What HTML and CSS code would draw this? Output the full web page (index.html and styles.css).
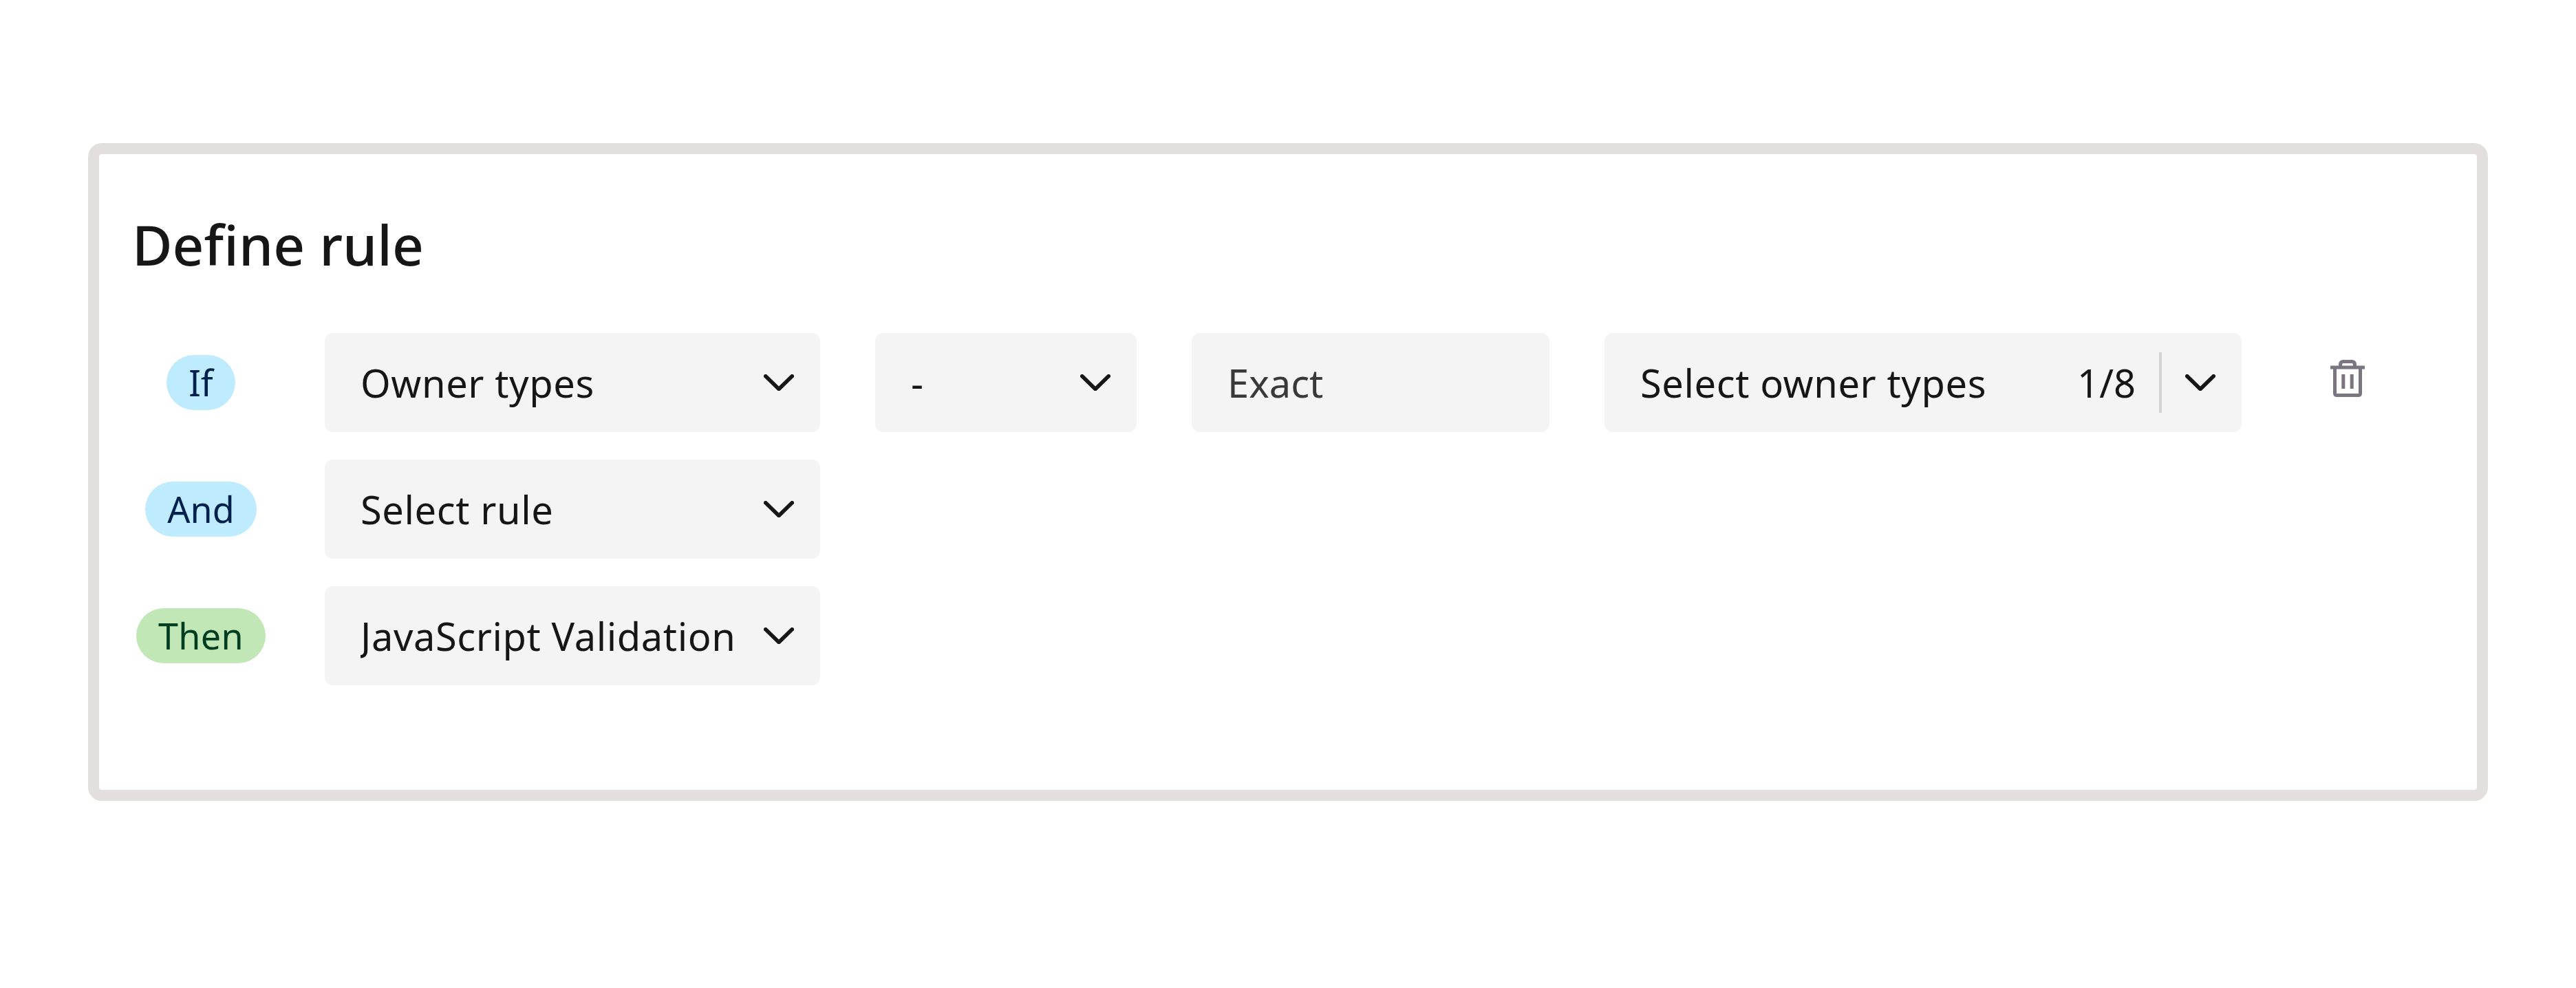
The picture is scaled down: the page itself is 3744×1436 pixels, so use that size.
FILE: index.html
```html
<!DOCTYPE html>
<html lang="en">
<head>
<meta charset="utf-8">
<title>Define rule</title>
<link rel="stylesheet" href="styles.css">
</head>
<body>
<main class="card">
  <h1 class="title">Define rule</h1>
  <div class="rules">
    <div class="row">
      <div class="tag-cell"><span class="tag">If</span></div>
      <div class="field field-rule"><span class="label">Owner types</span>
        <svg class="chevron" viewBox="0 0 44 24"><path d="M2.8 2.8 22 21.4 41.2 2.8"/></svg></div>
      <div class="field field-operator"><span class="label">-</span>
        <svg class="chevron" viewBox="0 0 44 24"><path d="M2.8 2.8 22 21.4 41.2 2.8"/></svg></div>
      <div class="field field-match"><span class="label">Exact</span></div>
      <div class="field field-owner"><span class="label">Select owner types</span>
        <span class="count">1/8</span><i class="divider"></i>
        <svg class="chevron" viewBox="0 0 44 24"><path d="M2.8 2.8 22 21.4 41.2 2.8"/></svg></div>
      <svg class="trash" viewBox="0 0 50 56"><path d="M0 12H50M6.5 12V49.5Q6.5 52.5 9.5 52.5H40.5Q43.5 52.5 43.5 49.5V12M14.5 12V8Q14.5 3.5 19 3.5H31Q35.5 3.5 35.5 8V12M18.8 22V43M31.2 22V43"/></svg>
    </div>
    <div class="row">
      <div class="tag-cell"><span class="tag">And</span></div>
      <div class="field field-rule"><span class="label">Select rule</span>
        <svg class="chevron" viewBox="0 0 44 24"><path d="M2.8 2.8 22 21.4 41.2 2.8"/></svg></div>
    </div>
    <div class="row">
      <div class="tag-cell"><span class="tag tag-then">Then</span></div>
      <div class="field field-rule"><span class="label">JavaScript Validation</span>
        <svg class="chevron" viewBox="0 0 44 24"><path d="M2.8 2.8 22 21.4 41.2 2.8"/></svg></div>
    </div>
  </div>
</main>
</body>
</html>
```
FILE: styles.css
```css
* { box-sizing: border-box; }
body {
  margin: 0;
  padding: 208px 128px;
  background: #fff;
  color: #161616;
  font-family: "Noto Sans", sans-serif;
}
.card {
  height: 956px;
  border: 16px solid #e3dfde;
  border-radius: 20px;
  padding: 76px 48px 0;
  background: #fff;
}
.title {
  margin: 0;
  font-size: 80px;
  line-height: 110px;
  font-weight: 500;
  font-variant-ligatures: none;
  letter-spacing: 0.1px;
}
.rules { display: flex; flex-direction: column; gap: 40px; margin-top: 74px; }
.row { display: flex; align-items: center; height: 144px; }
.tag-cell { width: 200px; margin-right: 80px; display: flex; justify-content: center; }
.tag {
  height: 80px;
  padding: 0 32px;
  border-radius: 40px;
  background: #bfebff;
  color: #00204d;
  font-size: 52px;
  line-height: 80px;
}
.tag-then { background: #c0e7b5; color: #003d20; letter-spacing: 0.4px; }
.field {
  height: 144px;
  display: flex;
  align-items: center;
  justify-content: space-between;
  padding: 0 38px 0 52px;
  border-radius: 12px;
  background: #f4f4f4;
  font-size: 56px;
  line-height: 76px;
  letter-spacing: 0.6px;
  white-space: nowrap;
}
.field + .field { margin-left: 80px; }
.label { overflow: hidden; }
.field-rule { width: 720px; }
.field-operator { width: 380px; }
.field-match { width: 520px; color: #393939; letter-spacing: 0; }
.field-owner { width: 926px; }
.count { margin-left: auto; letter-spacing: 0; }
.divider { width: 4px; height: 88px; margin: 0 34px; background: #d4d4d4; }
.chevron { width: 44px; height: 24px; flex: none; }
.chevron path { fill: none; stroke: #161616; stroke-width: 5.6; stroke-linejoin: round; stroke-linecap: round; }
.trash { width: 50px; height: 56px; margin: -12px 0 0 129px; flex: none; }
.trash path { fill: none; stroke: #7b7580; stroke-width: 5; }
```
